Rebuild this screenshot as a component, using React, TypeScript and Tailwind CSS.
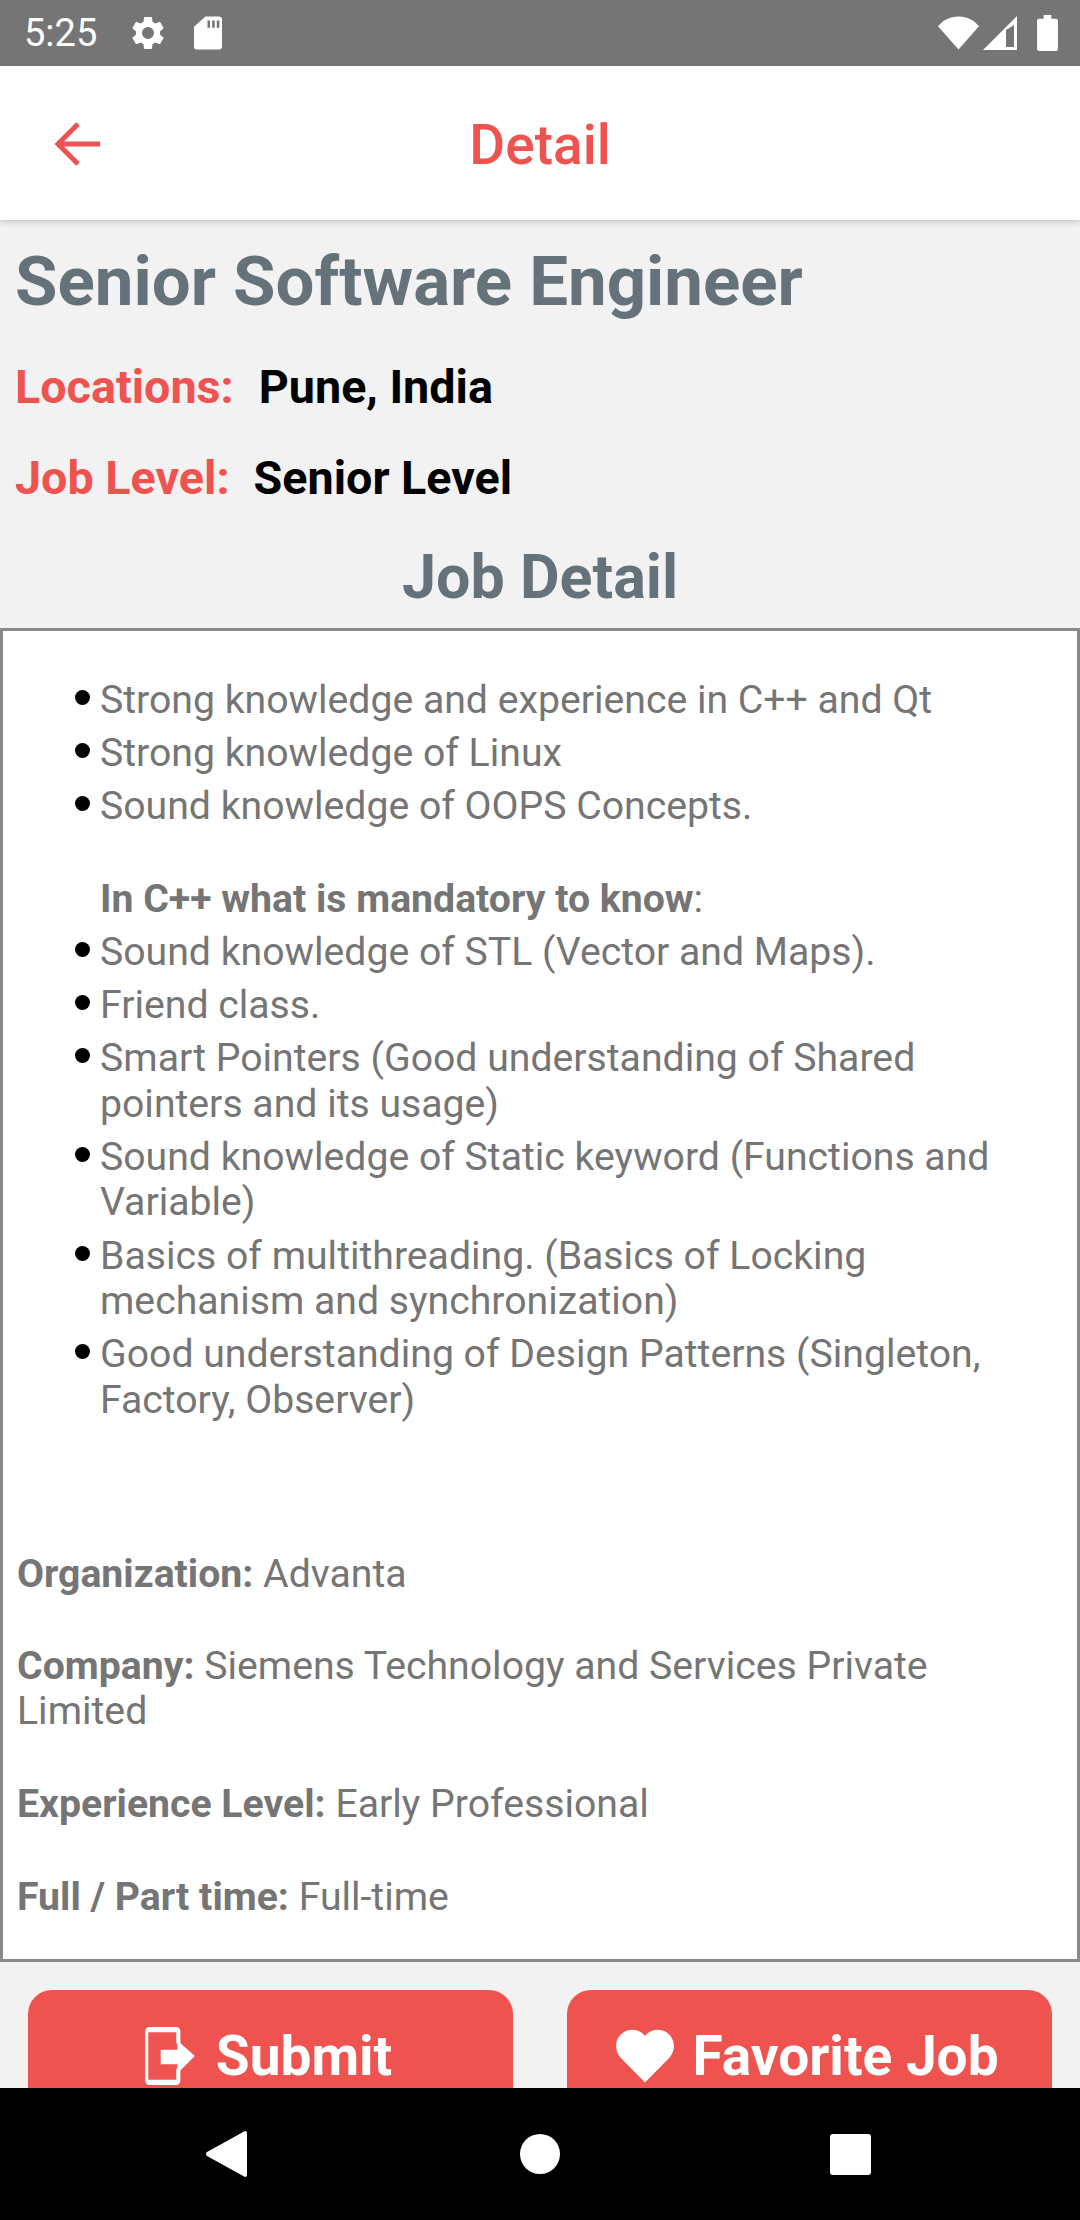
import React from "react";

const Li = ({ children, className = "" }: { children: React.ReactNode; className?: string }) => (
  <li className={`relative ${className}`}>
    <span className="absolute left-[-25px] top-[12px] h-[15px] w-[15px] rounded-full bg-black" />
    {children}
  </li>
);

const P = ({ label, value, className = "" }: { label: string; value: string; className?: string }) => (
  <p className={className}>
    <b className="font-bold">{label}</b> {value}
  </p>
);

export default function App() {
  return (
    <div className="flex h-[2220px] w-[1080px] flex-col overflow-hidden bg-[#f2f2f2] font-['Roboto',sans-serif]">
      <div className="flex h-[66px] shrink-0 items-center bg-[#757575] pl-[24px] pr-[22px] text-white">
        <span className="text-[38px] leading-none">5:25</span>
        <svg className="ml-[31px] h-[40px] w-[40px]" viewBox="0 0 24 24" fill="white">
          <path d="M19.14 12.94c.04-.3.06-.61.06-.94s-.02-.64-.07-.94l2.03-1.58a.5.5 0 0 0 .12-.61l-1.92-3.32a.5.5 0 0 0-.59-.22l-2.39.96a7 7 0 0 0-1.62-.94l-.36-2.54a.48.48 0 0 0-.48-.41h-3.84a.47.47 0 0 0-.47.41l-.36 2.54c-.59.24-1.13.57-1.62.94l-2.39-.96a.48.48 0 0 0-.59.22L2.74 8.87a.47.47 0 0 0 .12.61l2.03 1.58c-.05.3-.09.63-.09.94s.02.64.07.94l-2.03 1.58a.5.5 0 0 0-.12.61l1.92 3.32c.12.22.37.29.59.22l2.39-.96c.5.38 1.03.7 1.62.94l.36 2.54c.05.24.24.41.48.41h3.84c.24 0 .44-.17.47-.41l.36-2.54c.59-.24 1.13-.56 1.62-.94l2.39.96c.22.08.47 0 .59-.22l1.92-3.32a.46.46 0 0 0-.12-.61zM12 15.6a3.6 3.6 0 1 1 0-7.2 3.6 3.6 0 0 1 0 7.2z" />
        </svg>
        <svg className="ml-[26px] h-[36px] w-[28px]" viewBox="0 0 27 32" fill="white">
          <path d="M11 0h13a3 3 0 0 1 3 3v26a3 3 0 0 1-3 3H3a3 3 0 0 1-3-3V10zM13 4v7h2.500V4zM17.500 4v7H20V4zM22 4v7h2.500V4z" fillRule="evenodd" />
        </svg>
        <div className="ml-auto flex items-center">
          <svg className="h-[34px] w-[41px]" viewBox="0 0 42 34" fill="white">
            <path d="M21 34 0 10C5 4 12 0 21 0s16 4 21 10z" />
          </svg>
          <svg className="ml-[4px] h-[34px] w-[34px]" viewBox="0 0 34 34" fill="white">
            <path fillRule="evenodd" d="M34 0v34H0zM31 9l-8 5v17h8z" />
          </svg>
          <svg className="ml-[20px] h-[36px] w-[21px]" viewBox="0 0 22 38" fill="white">
            <path d="M7 0h8v4h5a2 2 0 0 1 2 2v30a2 2 0 0 1-2 2H2a2 2 0 0 1-2-2V6a2 2 0 0 1 2-2h5z" />
          </svg>
        </div>
      </div>

      <div className="relative z-10 flex h-[154px] shrink-0 items-center justify-center bg-white shadow-[0_2px_6px_rgba(0,0,0,0.2)]">
        <svg className="absolute left-[54px] top-[56px] h-[44px] w-[46px]" viewBox="0 0 46 44" fill="none" stroke="#ef5350" strokeWidth="5">
          <path d="M46 22H4M24 2 4 22l20 20" />
        </svg>
        <h1 className="relative top-[2px] text-[55px] font-medium leading-none text-[#ef5350]">Detail</h1>
      </div>

      <div className="flex min-h-0 flex-1 flex-col overflow-hidden">
        <h2 className="mt-[25px] pl-[15px] text-[69px] font-bold leading-[74px] text-[#66727a]">Senior Software Engineer</h2>
        <div className="mt-[40px] flex pl-[15px] text-[46.7px] font-bold leading-[56px]">
          <span className="text-[#ef5350]">Locations:</span>
          <span className="ml-[25px] text-black">Pune, India</span>
        </div>
        <div className="mt-[35px] flex pl-[15px] text-[46.7px] font-bold leading-[56px]">
          <span className="text-[#ef5350]">Job Level:</span>
          <span className="ml-[24px] text-black">Senior Level</span>
        </div>
        <h3 className="mt-[35px] text-center text-[61px] font-bold leading-[72px] text-[#66727a]">Job Detail</h3>
        <div className="mt-[15px] h-[1334px] shrink-0 border-[3px] border-[#8a8a8a] bg-white pl-[14px] pr-[20px] text-[39.2px] leading-[45.5px] text-[#757575]">
          <ul className="mt-[47px] ml-[83px] flex flex-col gap-[7.7px]">
            <Li>Strong knowledge and experience in C++ and Qt</Li>
            <Li>Strong knowledge of Linux</Li>
            <Li>Sound knowledge of OOPS Concepts.</Li>
            <li className="mt-[39px]"><b className="font-bold">In C++ what is mandatory to know</b>:</li>
            <Li>Sound knowledge of STL (Vector and Maps).</Li>
            <Li>Friend class.</Li>
            <Li>Smart Pointers (Good understanding of Shared pointers and its usage)</Li>
            <Li>Sound knowledge of Static keyword (Functions and Variable)</Li>
            <Li>Basics of multithreading. (Basics of Locking mechanism and synchronization)</Li>
            <Li>Good understanding of Design Patterns (Singleton, Factory, Observer)</Li>
          </ul>
          <P className="mt-[129px]" label="Organization:" value="Advanta" />
          <P className="mt-[46px]" label="Company:" value="Siemens Technology and Services Private Limited" />
          <P className="mt-[47px]" label="Experience Level:" value="Early Professional" />
          <P className="mt-[48px]" label="Full / Part time:" value="Full-time" />
        </div>
        <div className="mt-[28px] flex justify-between px-[28px]">
          <button className="flex h-[132px] w-[485px] items-center justify-center gap-[21px] rounded-[24px] bg-[#ef5350] pr-[6px] text-[55px] font-bold leading-none text-white">
            <svg className="h-[58px] w-[52px]" viewBox="0 0 50 56" fill="white">
              <path d="M6 0h26a4 4 0 0 1 4 4v12h-4V5H5v46h27V40h4v12a4 4 0 0 1-4 4H6a4 4 0 0 1-4-4V4a4 4 0 0 1 4-4zM17 22h16V13l17 15-17 17v-9H17z" />
            </svg>
            Submit
          </button>
          <button className="flex h-[132px] w-[485px] items-center justify-center gap-[18px] rounded-[24px] bg-[#ef5350] pr-[4px] text-[55px] font-bold leading-none text-white">
            <svg className="h-[54px] w-[58px]" viewBox="0 0 24 22" fill="white">
              <path d="M12 22 1.900 11.700C-.6 9-.6 4.800 1.900 2.200a6.800 6.800 0 0 1 9.700 0l.4.500.4-.5a6.800 6.800 0 0 1 9.700 0c2.500 2.600 2.500 6.800 0 9.500z" />
            </svg>
            Favorite Job
          </button>
        </div>
      </div>

      <div className="flex h-[132px] shrink-0 items-center justify-center bg-black">
        <svg className="absolute left-[205px] h-[46px] w-[42px]" viewBox="0 0 42 46" fill="white">
          <path d="M40 0 2 21a2.500 2.500 0 0 0 0 4l38 21a2 2 0 0 0 2-2V2a2 2 0 0 0-2-2z" />
        </svg>
        <span className="absolute left-[520px] h-[40px] w-[40px] rounded-full bg-white" />
        <span className="absolute left-[830px] h-[41px] w-[41px] rounded-[3px] bg-white" />
      </div>
    </div>
  );
}
